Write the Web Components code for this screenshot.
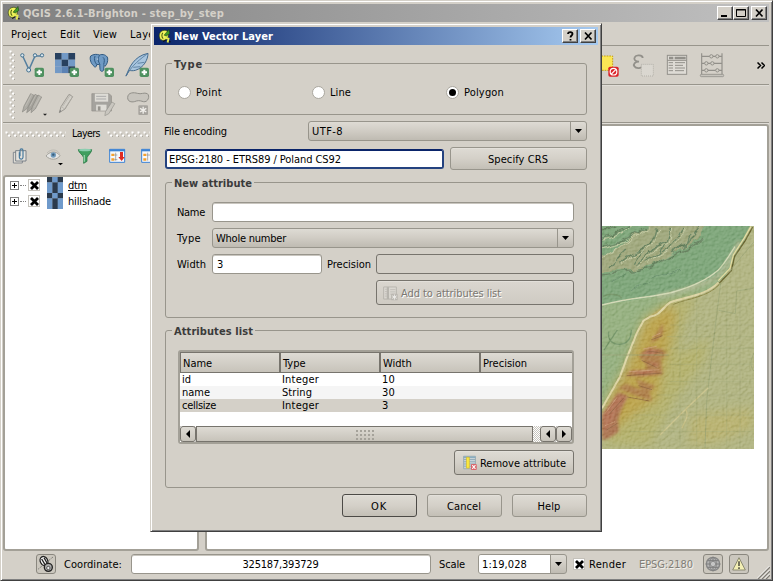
<!DOCTYPE html>
<html lang="en">
<head>
<meta charset="utf-8">
<title>QGIS 2.6.1-Brighton - step_by_step</title>
<style>
html,body{margin:0;padding:0}
body{width:773px;height:581px;overflow:hidden;background:#d4d0c8;font:11px/13px "DejaVu Sans Condensed","DejaVu Sans","Liberation Sans",sans-serif;font-stretch:condensed;color:#000}
</style>
</head>
<body>
<gis-window></gis-window>
<script>
/* Icon artwork: [viewBox, width, height, markup] */
const plus = (x,y)=>`<rect x="${x}" y="${y}" width="28" height="28" rx="5" fill="#4f9160"/><path d="M${x+14} ${y+6}v16M${x+6} ${y+14}h16" stroke="#fff" stroke-width="6"/>`;
const checker = (x,y,s,rows)=>rows.map((r,j)=>[...r].map((c,i)=>`<rect x="${x+i*s}" y="${y+j*s}" width="${s+.3}" height="${s+.3}" fill="${{d:'#27405f',m:'#5b82b4',l:'#7299c6'}[c]}"/>`).join('')).join('');
const ICONS = {
 qgis:['0 0 16 16',14,14,`<path d="M7 1.500C3 2 1 5 1.500 9c.5 3 3 4.500 5.500 4 3-.5 5-3.500 5-7 0-3-2-5-5-4.500z" fill="#eef35c" stroke="#1d2a08" stroke-width=".7"/><path d="M5.500 4.500c-1.500 1.500-1.500 5 .5 6.500" stroke="#4c5a12" stroke-width="1.200" fill="none"/><path d="M7 7L12.500.500l1 4.500-4 3z" fill="#3f9b28" stroke="#17350b" stroke-width=".6"/><path d="M8 10l4 1-1 4.500" stroke="#e6ea50" stroke-width="2.200" fill="none"/><path d="M6 14.500l3-2M12.500 14.500h2" stroke="#111" stroke-width="1.200"/>`],
 vector:['57 156 78 78',26,26,`<path d="M68 168L87 209 105 168H124" fill="none" stroke="#557f9f" stroke-width="4.500"/><g fill="#dce8ef" stroke="#44718f" stroke-width="3"><circle cx="67" cy="166" r="5"/><circle cx="86" cy="210" r="6"/><circle cx="105" cy="166" r="5"/><circle cx="126" cy="166" r="5"/></g>${plus(104,203)}`],
 raster:['162 156 78 78',26,26,checker(165,159,20,['dld','ldl','lmd'])+plus(209,203)],
 postgis:['267 156 78 78',26,26,`<path d="M272 168c8-6 20-6 26-3 10-4 22 0 25 9 1 11-2 19-8 25l-3-3-1 14c-3 6-10 5-11-2l-1-15-9 1-1 5c-3 4-8 1-9-3-7-4-12-21-8-28z" fill="#6f9ac4" stroke="#315a82" stroke-width="3"/><path d="M285 168c-4 10 0 20 5 25M299 166c-7 9-5 18 1 27M309 172c6 4 4 13 2 22" fill="none" stroke="#315a82" stroke-width="3"/><circle cx="292" cy="177" r="1.800" fill="#fff"/>${plus(314,203)}`],
 feather:['372 156 78 78',26,26,`<path d="M378 228C388 204 400 169 444 160c0 18-12 43-38 51-8 2-14 1-18 0z" fill="#a8c5df" stroke="#456b8e" stroke-width="3"/><path d="M378 229C390 205 408 186 440 163M400 202l21-2M413 190l20-3" fill="none" stroke="#54799a" stroke-width="2.500"/>${plus(419,203)}`],
 pencils:['60 276 84 84',28,28,`<g stroke="#8a8882" stroke-width="2"><path d="M67 342l5-18 20-37 10 5-20 39z" fill="#aeaca5"/><path d="M80 344l5-18 20-37 10 5-20 39z" fill="#a5a39c"/><path d="M93 344l4-18 17-35 11 6-19 36z" fill="#b2b0a9"/><path d="M76 325l20-37M90 325l19-36M103 328l18-34" fill="none" stroke="#c5c2bb"/></g><path d="M129 347h12l-6 6z" fill="#222"/>`],
 pencil:['168 276 66 84',22,28,`<path d="M178 344l5-18 24-37 11 7-23 37z" fill="#d2cfc8" stroke="#9d9a93" stroke-width="3"/><path d="M188 325l24-36M195 331l22-33M184 326l10 7" stroke="#b0ada6" stroke-width="2"/><path d="M178 344l2-8 4 3z" fill="#777"/>`],
 save:['267 270 80 84',27,28,`<path d="M275 281h52l7 7v45h-59z" fill="#a5a39e" stroke="#92908a" stroke-width="2"/><path d="M284 281h40v24h-40z" fill="#dedcd6"/><path d="M288 289h30M288 297h30" stroke="#aaa" stroke-width="3"/><path d="M288 314h31v18h-31z" fill="#dedcd6"/><path d="M293 319h8v13h-8z" fill="#96948e"/><path d="M314 347l2-12 19-29 9 5-18 30z" fill="#c9c6bf" stroke="#96948e" stroke-width="2"/>`],
 shape:['375 270 78 84',26,28,`<path d="M383 293c0-17 20-16 29-13 12 4 20-4 30 1 9 7 2 27-12 24-12-4-16-4-27 0-9 2-20 0-20-12z" fill="#c7c4bd" stroke="#92908a" stroke-width="3"/><rect x="415" y="316" width="29" height="29" rx="3" fill="#a7a49e"/><path d="M429.500 320v21M420 325l19 11M439 325l-19 11" stroke="#f1efeb" stroke-width="4"/>`],
 deselect:['30 156 60 78',20,26,`<path d="M10 168h58v43H10z" fill="#fbe755" stroke="#c6a117" stroke-width="3" stroke-dasharray="5 3"/><rect x="55" y="200" width="31" height="30" rx="5" fill="#dc2329"/><circle cx="70.500" cy="215" r="10" fill="none" stroke="#fff" stroke-width="3.500"/><path d="M64 222l14-14" stroke="#fff" stroke-width="3.500"/>`],
 expr:['126 156 69 78',23,26,`<path d="M158 174c0-9-20-11-24-2-4 8 3 12 13 13-12 0-18 7-14 14 5 8 24 7 27-3" fill="none" stroke="#92908a" stroke-width="5.500"/><rect x="154" y="193" width="36" height="35" fill="#dad7d0" stroke="#b3b0a9" stroke-width="3" stroke-dasharray="3 3"/>`],
 table:['228 156 66 78',22,26,`<rect x="232" y="166" width="58" height="57" fill="#dedbd5" stroke="#92908a" stroke-width="3"/><path d="M237 174h13M254 174h33" stroke="#92908a" stroke-width="7"/><path d="M232 181h58" stroke="#92908a" stroke-width="3"/><path d="M236 188h13M255 188h30M236 196h13M255 196h24M236 204h13M255 204h30M236 212h13M255 212h27" stroke="#92908a" stroke-width="3"/>`],
 abacus:['327 156 78 78',26,26,`<path d="M335 160v66M396 160v66M335 169h61M335 190h61M335 211h61" fill="none" stroke="#92908a" stroke-width="3.500"/><rect x="331" y="223" width="70" height="7" rx="3" fill="#c6c3bc" stroke="#92908a" stroke-width="2.500"/><g fill="#d4d0c8" stroke="#92908a" stroke-width="3"><circle cx="364" cy="169" r="5"/><circle cx="382" cy="169" r="5"/><circle cx="349" cy="190" r="5"/><circle cx="367" cy="190" r="5"/><circle cx="349" cy="211" r="5"/><circle cx="382" cy="211" r="5"/></g>`],
 copy:['36 80 51 54',17,18,`<path d="M40 96h27v32H40z" fill="#dfdcd5" stroke="#767d85" stroke-width="2.500"/><path d="M47 91h31v31H47z" fill="#e5e2dc" stroke="#68727b" stroke-width="2.500"/><path d="M58 96v15c1 7 11 7 11 0V91c0-7-9-7-9 0v17" fill="none" stroke="#45789d" stroke-width="3.500"/>`],
 eye:['132 80 60 60',20,20,`<path d="M138 107c10-14 31-17 42-1-9 14-30 14-42 1z" fill="#e5e5e3" stroke="#a4a29c" stroke-width="3"/><circle cx="160" cy="104" r="8" fill="#6f9abd"/><circle cx="160" cy="103" r="3.500" fill="#395d78"/><path d="M141 98c11-13 30-12 38 2" fill="none" stroke="#b1afa9" stroke-width="2"/><path d="M174 128h15l-7.500 7z" fill="#000"/>`],
 funnel:['231 80 48 54',16,18,`<path d="M235 88h40c1 8-12 17-14 24v11l-10 6v-17c-2-8-16-16-16-24z" fill="#3f9e5f" stroke="#2a7a45" stroke-width="2.500"/><ellipse cx="255" cy="89" rx="19" ry="4" fill="#8cceb0"/><path d="M253 104v20" stroke="#8fd0a6" stroke-width="4"/>`],
 expand:['324 80 54 54',18,18,`<path d="M329 87h45v39h-45z" fill="#f7f8fb" stroke="#3d83d3" stroke-width="3"/><path d="M328 90h47" stroke="#3d83d3" stroke-width="6"/><path d="M334 100h9v7h-9zM334 114h9v7h-9z" fill="#f4a02e"/><path d="M347 97v24M343 104h9M343 118h9" stroke="#888" stroke-width="2"/><path d="M360 95h9v15h5l-9 12-10-12h5z" fill="#e02b20"/>`],
 collapse:['420 80 54 54',18,18,`<path d="M425 87h45v39h-45z" fill="#f7f8fb" stroke="#3d83d3" stroke-width="3"/><path d="M424 90h47" stroke="#3d83d3" stroke-width="6"/><path d="M430 100h9v7h-9zM430 114h9v7h-9z" fill="#f4a02e"/><path d="M443 97v24M440 104h12" stroke="#888" stroke-width="2"/>`],
 layer:['0 0 16 16',16,16,checker(0,0,5.34,['dld','ldl','ldl']).replaceAll('#27405f','#2b3a4c').replaceAll('#7299c6','#6f9acb')],
 attradd:['38 284 46 46',15,15,`<g opacity=".6"><path d="M40 287h39v37H40z" fill="#dedcd6" stroke="#a5a39d" stroke-width="3"/><path d="M53 287v37" stroke="#a5a39d" stroke-width="7"/><path d="M44 294h6M44 301h6M44 308h6M44 315h6M60 295h16M60 302h16M60 309h16" stroke="#a5a39d" stroke-width="2"/><rect x="63" y="308" width="20" height="20" rx="2" fill="#aaa8a2"/><path d="M73 310v16M66 314l14 8M80 314l-14 8" stroke="#fff" stroke-width="3"/></g>`],
 attrdel:['272 402 48 50',16,16,`<path d="M276 406h37v39h-37z" fill="#c9d4d9" stroke="#9cabb3" stroke-width="3"/><path d="M276 409h37" stroke="#82a9bd" stroke-width="4"/><path d="M277 416h35M277 423h35M277 430h35M277 437h35" stroke="#7797a8" stroke-width="2"/><path d="M285 409h9v34h-9z" fill="#fbe93f" stroke="#d1b727" stroke-width="2"/><rect x="299" y="430" width="18" height="19" rx="3" fill="#d96369"/><path d="M303 434l10 11M313 434l-10 11" stroke="#fff" stroke-width="3.500"/>`],
 mouse:['110 104 54 54',18,18,`<path d="M114 146L158 110" stroke="#333" stroke-width="2" stroke-dasharray="3 3"/><ellipse cx="131" cy="122" rx="11" ry="14" transform="rotate(-28 131 122)" fill="#f8f8f8" stroke="#222" stroke-width="4"/><ellipse cx="144" cy="141" rx="12" ry="12" fill="#aaa" stroke="#222" stroke-width="4"/><path d="M124 116l10 17M131 112l9 16" stroke="#222" stroke-width="4"/><circle cx="144" cy="143" r="5" fill="#eee" stroke="#222" stroke-width="2"/>`],
 crs:['939 105 54 54',18,18,`<circle cx="966" cy="132" r="20" fill="#b4b4b4" stroke="#868686" stroke-width="4"/><ellipse cx="966" cy="132" rx="10" ry="20" fill="none" stroke="#868686" stroke-width="3"/><path d="M944 132h44M966 110v44M950 122h32M950 142h32" stroke="#7d7d7d" stroke-width="3"/><circle cx="966" cy="132" r="8" fill="#c5c5c5" stroke="#8c8c8c" stroke-width="3"/>`],
 warn:['1017 105 54 54',18,18,`<path d="M1044 113l19 37h-38z" fill="#f3efb4" stroke="#8b8a72" stroke-width="3" stroke-linejoin="round"/><path d="M1044 124v14M1044 142v5" stroke="#34342c" stroke-width="4"/>`],
 min:['0 0 12 10',12,10,'<path d="M2 7h6v2H2z"/>'],
 max:['0 0 12 10',12,10,'<path d="M1.500 1.500h9v7h-9zM1 2h10" fill="none" stroke="#000"/>'],
 close:['0 0 12 10',12,10,'<path d="M3 1.500l6.500 7M9.500 1.500l-6.500 7" stroke="#000" stroke-width="1.700"/>'],
 help:['0 0 12 10',12,10,'<path d="M4 3C4 .5 8.500.5 8.500 3c0 1.500-2 1.500-2 3.500M6.500 8v1.500" fill="none" stroke="#000" stroke-width="1.800"/>'],
 down:['0 0 7 4',7,4,'<path d="M0 0h7L3.500 4z"/>'],
 left:['0 0 4 8',4,8,'<path d="M4 0v8L0 4z"/>'],
 right:['0 0 4 8',4,8,'<path d="M0 0v8l4-4z"/>'],
 cross:['0 0 9 9',9,9,'<path d="M1 1l7 7M8 1l-7 7" stroke="#000" stroke-width="2.800"/>'],
 more:['0 0 8 7',8,7,'<path d="M.5.5l3 3-3 3M4.500.5l3 3-3 3" fill="none" stroke="#000" stroke-width="1.500"/>'],
 sizegrip:['0 0 13 13',13,13,'<path d="M1 13L13 1M5 13l8-8M9 13l4-4" stroke="#807d76" stroke-width="1.400"/><path d="M0 12.500L12.500 0M4 12.500L12.500 4M8 12.500L12.500 8" stroke="#fff" stroke-width=".8"/>']
};

function define(name, css, html, after){
  customElements.define(name, class extends HTMLElement{
    connectedCallback(){
      if(this.shadowRoot) return;
      const t=document.createElement('template');
      t.innerHTML=`<style>:host{display:block;box-sizing:border-box}*{box-sizing:border-box}${css}</style>`+(typeof html==='function'?html(this):html);
      this.attachShadow({mode:'open'}).append(t.content.cloneNode(true));
      if(after) after(this);
    }
  });
}

define('ui-icon',':host{flex:none;line-height:0}svg{display:block}',el=>{
  const [vb,w,h,m]=ICONS[el.getAttribute('name')];
  return `<svg width="${w}" height="${h}" viewBox="${vb}">${m}</svg>`;
});

/* A label with an optional fixed advance width; spacing is spread between its letters */
define('ui-label',':host{display:inline-block;flex:none;white-space:nowrap}span{display:inline-block;white-space:pre}:host([underline]) span{text-decoration:underline}',
 el=>`<span>${el.getAttribute('text')}</span>`,
 el=>{
  const w=+el.getAttribute('w'); if(!w) return;
  const s=el.shadowRoot.querySelector('span');
  const n=s.textContent.length, nat=s.getBoundingClientRect().width;
  s.style.letterSpacing=((w+1-nat)/n).toFixed(3)+'px';
  el.style.width=w+'px';
  s.style.marginLeft='-1px';
 });

define('cap-button',':host{flex:none;width:16px;height:14px;background:#d4d0c8;border:1px solid;border-color:#fff #404040 #404040 #fff;box-shadow:inset -1px -1px #808080;padding:1px}',
 el=>`<ui-icon name="${el.getAttribute('icon')}"></ui-icon>`);

define('title-bar',':host{display:flex;align-items:center;flex:none;height:18px;padding:0 2px 0 4px;font-weight:bold;gap:3px}.b{margin-left:auto;display:flex}',
 `<ui-icon name="qgis"></ui-icon><slot></slot><div class="b"><slot name="buttons"></slot></div>`);

define('group-box',`:host{position:relative;border:1px solid #98958c;border-radius:3px}
 .t{position:absolute;left:6px;top:-6px;background:#d4d0c8;padding:0 2px;font-weight:bold;color:#3b3b3b;line-height:13px}`,
 el=>`<ui-label class="t" text="${el.getAttribute('label')}"></ui-label><slot></slot>`,
 el=>{
  const s=el.shadowRoot.querySelector('.t').shadowRoot.querySelector('span');
  const w=+el.getAttribute('lw'); s.style.letterSpacing=((w+1-s.getBoundingClientRect().width)/s.textContent.length).toFixed(3)+'px';
 });

define('push-button',`:host{display:flex;flex:none;align-items:center;justify-content:center;gap:3px;border:1px solid #98958c;border-radius:3px;background:linear-gradient(#dedbd4,#d4d0c8 50%,#c3bfb6);box-shadow:inset 0 1px #e3e0da;padding-top:1px}
 :host([dark]){border-color:#77746d}:host([default]){border-color:#4c4a46}
 :host([disabled]){background:linear-gradient(#dad6cf,#cfcbc3);border-color:#77746d;color:#7b7872;text-shadow:1px 1px #fff}`,'<slot></slot>');

define('line-edit',`:host{display:flex;align-items:center;flex:none;height:20px;background:#fff;border:1px solid #98958c;border-radius:3px;padding:1px 5px 0;box-shadow:inset 0 1px #c9c6bf}
 :host([focus]){border:2px solid #24427f;border-top-color:#0a246a;padding:1px 3px 0;box-shadow:none}
 :host([disabled]){background:#d4d0c8;border-color:#77746d;box-shadow:none}`,'<slot></slot>');

define('combo-box',`:host{display:flex;align-items:stretch;flex:none;height:20px;border:1px solid #98958c;border-radius:3px;background:linear-gradient(#dedbd4,#d0ccc4 50%,#bfbbb2);overflow:hidden}
 .v{flex:1;display:flex;align-items:center;padding-left:4px}.a{width:16px;border-left:1px solid #98958c;display:grid;place-items:center}
 :host([editable]) .v{background:#fff}`,'<div class="v"><slot></slot></div><div class="a"><ui-icon name="down"></ui-icon></div>');

define('radio-button',`:host{display:flex;align-items:center;gap:6px;width:134px;flex:none}
 i{width:13px;height:13px;border-radius:50%;border:1px solid #aaa79f;background:#fff;display:grid;place-items:center}
 i::after{content:"";width:7px;height:7px;border-radius:50%}:host([checked]) i::after{background:#000}ui-label{margin-top:1px}`,'<i></i><slot></slot>');

define('check-box',':host{flex:none;width:12px;height:12px;border:1px solid #c5c2bb;background:#fff;padding:1px 0 0 1px}','<ui-icon name="cross"></ui-icon>');

define('tool-button',':host{flex:none;width:20px;height:20px;border:1px solid #8a877f;border-radius:3px;background:#cbc7be}',el=>`<ui-icon name="${el.getAttribute('icon')}"></ui-icon>`);

define('drag-grip',':host{flex:none;line-height:0}svg{display:block}',
`<svg width="100%" height="100%"><defs><pattern id="z" width="6" height="6" patternUnits="userSpaceOnUse"><path d="M.5.5h2v2h-2zM3 3.500h2v2h-2z" fill="#fff"/><path d="M2 2.500h1.500v1H2zM5 5h1v1H5z" fill="#aaa79f"/></pattern></defs><rect width="100%" height="100%" fill="url(#z)"/></svg>`);

define('tool-bar',':host{display:flex;flex:none;align-items:center;border-bottom:1px solid #98958c;box-shadow:0 1px #e0ddd7}drag-grip{width:6px;height:30px;margin:0 4px 0 6px}','<drag-grip></drag-grip><slot></slot>');

define('layer-row',`:host{display:flex;align-items:center;height:16px;color:#000}
 .e{width:9px;height:9px;border:1px solid #808080;background:linear-gradient(#000,#000) center/5px 1px no-repeat,linear-gradient(#000,#000) center/1px 5px no-repeat}
 .d{width:6px;border-top:1px dotted #808080;margin:0 2px 0 1px}ui-icon{margin:0 6px 0 7px}`,
 '<div class="e"></div><div class="d"></div><check-box></check-box><ui-icon name="layer"></ui-icon><slot></slot>');

define('layers-panel',`:host{width:196px;display:flex;flex-direction:column}
 .h{height:19px;display:flex;align-items:center;padding:0 0 0 2px;gap:7px;font-size:10.5px}.h drag-grip{width:61px;height:6px}.h drag-grip+ui-label+drag-grip{width:90px}
 .t{height:32px;display:flex;align-items:flex-start;padding:4px 0 0 9px}
 .l{flex:1;background:#fff;border:2px solid #a3a097;border-radius:3px;padding:0 0 0 5px}`,
 `<div class="h"><drag-grip></drag-grip><ui-label text="Layers" w="27"></ui-label><drag-grip></drag-grip></div>
 <div class="t"><ui-icon name="copy"></ui-icon><ui-icon name="eye" style="margin-left:15px"></ui-icon><ui-icon name="funnel" style="margin-left:13px"></ui-icon><ui-icon name="expand" style="margin-left:15px"></ui-icon><ui-icon name="collapse" style="margin-left:14px"></ui-icon></div>
 <div class="l"><layer-row><ui-label underline text="dtm" w="18"></ui-label></layer-row><layer-row><ui-label text="hillshade" w="42"></ui-label></layer-row></div>`);

/* Shaded relief raster: colour ramp by elevation with a lit noise texture on top */
define('map-canvas',`:host{background:#fff;border:2px solid #a3a097;border-radius:3px;display:flex;justify-content:flex-end;align-items:flex-start;padding:100px 13px 0 0}svg{display:block}`,
`<svg width="152" height="223" viewBox="36 33 456 669" preserveAspectRatio="none">
<defs>
<filter id="b4" x="-30%" y="-30%" width="160%" height="160%"><feGaussianBlur stdDeviation="4"/></filter>
<filter id="b14" x="-40%" y="-40%" width="180%" height="180%"><feGaussianBlur stdDeviation="16"/></filter>
<filter id="rough" x="-5%" y="-5%" width="110%" height="110%"><feTurbulence type="fractalNoise" baseFrequency=".025" numOctaves="3" seed="3"/><feDisplacementMap in="SourceGraphic" scale="28" xChannelSelector="R" yChannelSelector="G"/></filter>
<filter id="hs" x="0" y="0" width="100%" height="100%" color-interpolation-filters="sRGB"><feTurbulence type="fractalNoise" baseFrequency=".1 .12" numOctaves="3" seed="7"/><feDiffuseLighting surfaceScale="3.500" diffuseConstant=".68" lighting-color="#fff"><feDistantLight azimuth="225" elevation="50"/></feDiffuseLighting></filter>
<clipPath id="c"><rect x="36" y="33" width="456" height="669"/></clipPath>
</defs>
<g clip-path="url(#c)">
<rect x="36" y="33" width="456" height="669" fill="#b3b685"/>
<path d="M0 0H492L484 35 440 120 405 185 350 228 240 260 160 315 110 440 30 600z" fill="#98b283"/>
<path d="M36 33H478L435 120 385 190 320 205 240 238 130 255 36 270z" fill="#81a87d"/>
<g filter="url(#b14)"><path d="M240 262L320 240 280 330 260 420 360 370 340 440 250 560 180 690 50 690 60 560 120 430 160 320z" fill="#b7b16a" opacity=".75"/><path d="M165 315L235 265 260 300 235 400 215 480 205 550 130 600 60 650 30 660 60 540 110 460z" fill="#bda550"/><path d="M300 600l190-20v60l-110 40-80 10z" fill="#bdb46c" opacity=".7"/></g>
<g filter="url(#rough)">
<path d="M26 130L90 95 150 50 190 23H350L325 70 255 115 205 145 150 160 26 170z" fill="#a2aa80"/>
<g fill="none" stroke="#6b8664" stroke-width="4"><path d="M26 98C70 90 110 84 170 36M26 72C70 66 90 52 120 30M90 147C110 110 190 110 200 40M140 150C180 120 190 90 232 80L242 36M170 140C220 110 250 110 282 36M250 118C270 80 310 90 328 30M26 178L180 158 250 125 340 70M60 155L110 105M130 146L160 100M200 130l25-45M280 100l20-40M26 48L80 36M60 66L100 36"/></g>
<g fill="none" stroke="#c3caa3" stroke-width="3"><path d="M26 102C76 94 114 88 176 38M95 150C116 114 194 114 206 42M145 153C184 124 196 94 238 84L248 38M175 144C226 114 256 114 288 38M26 78C74 70 94 56 126 32M36 130C70 100 120 90 150 60"/></g>
<path d="M120 225c20-18 40-10 60-22M180 190c30-16 50-6 90-24M60 200l50-24" fill="none" stroke="#6d936f" stroke-width="3"/>
</g>
<path d="M40 245c20-14 50-5 54 5M56 350c-4 24 10 38 32 38s36-16 36-44M42 405l40-60" fill="none" stroke="#78986c" stroke-width="4"/>
<path d="M200 246C270 230 340 214 385 182 415 150 430 110 450 80" fill="none" stroke="#abb891" stroke-width="14" filter="url(#b4)"/>
<path d="M36 270C120 246 190 248 250 231 310 214 350 196 385 165 405 145 418 120 435 95" fill="none" stroke="#d3d9b6" stroke-width="4"/>
<path d="M388 204L424 167 434 124 466 76 488 36" fill="none" stroke="#6f6b35" stroke-width="4"/><path d="M385 197L420 160 430 120 462 70 483 34" fill="none" stroke="#e8dda0" stroke-width="3.500"/>
<path d="M385 203C350 240 290 245 240 262 215 280 212 300 180 305L160 318 140 355 110 430 90 485 36 580" fill="none" stroke="#ddd5a6" stroke-width="6"/>
<path d="M388 208C355 246 295 250 250 268" fill="none" stroke="#8f8a4c" stroke-width="3"/>
<g filter="url(#b4)"><path d="M178 388l24-36 16-28 2 30-14 18zM145 425l30-28 40 4 16 16-18 14 4 48-70 6-42-3 20-14 50 2-12-30zM138 492l58 20-18 18 8 28-22-6-56-22-24-10 24-14 45 18z" fill="#b08350"/><path d="M36 600l24-32 24-36 30 10-20 42-10 30 2 36-30 20-20 5z" fill="#ad7856"/></g>
<g filter="url(#b4)"><path d="M150 418l30-16 36 6-30 12zM112 470l60-6 44 8-60 8zM168 438l40 8-8 10zM40 600l45-58 24 4-30 40-15 40-24 26z" fill="#b5785a"/></g>
<g fill="none" stroke="#8b6240" stroke-width="3" opacity=".65"><path d="M184 374l34-12M170 412c16-6 30 2 50 2M155 436l45 22M110 482l105-8M146 512l40 12M112 546l66 12M56 600l44-50M50 645l32-20"/></g>
<g fill="none" stroke="#cfa480" stroke-width="3" opacity=".7"><path d="M186 366l26-12M160 402l40-8M118 470l90-6M46 595l35-48M45 632l30-12"/></g>
<g fill="none" stroke="#97a272" stroke-width="2.500" opacity=".8"><path d="M392 205L380 300 360 470 350 560 345 700M386 286l50 10 4-68 50-8M36 420h200M492 80C460 120 440 140 420 170M492 415c-12 20-12 40 0 54"/></g>
<path d="M355 518L290 580 210 660M288 585c10 20-4 32-12 55" fill="none" stroke="#cac38c" stroke-width="4"/>
<g fill="none" stroke="#9aa373" stroke-width="1.500" opacity=".6"><path d="M240 330h250M230 365h262M240 400h250M240 448h250M240 500h250M200 540h292M130 600h360M120 650h370M270 280v420M320 250v450M410 230v470M450 230v470"/></g>
<rect x="36" y="33" width="456" height="669" filter="url(#hs)" style="mix-blend-mode:soft-light" opacity=".6"/>
</g></svg>`);

define('status-bar',':host{display:flex;align-items:center;flex:none;height:28px;padding:0 0 2px 33px;position:relative}.g{position:absolute;right:-1px;bottom:0}',
`<tool-button icon="mouse"></tool-button><ui-label text="Coordinate:" w="57" style="margin-left:9px"></ui-label>
<line-edit style="width:300px;margin-left:9px;justify-content:center"><ui-label text="325187,393729" w="75"></ui-label></line-edit>
<ui-label text="Scale" w="25" style="margin-left:9px"></ui-label>
<combo-box editable style="width:89px;margin-left:13px"><ui-label text="1:19,028" w="44"></ui-label></combo-box>
<check-box style="margin-left:6px"></check-box><ui-label text="Render" w="36" style="margin-left:5px"></ui-label>
<ui-label text="EPSG:2180" w="53" style="margin-left:14px;color:#817e77;text-shadow:1px 1px #f4f2ee"></ui-label>
<tool-button icon="crs" style="margin-left:10px"></tool-button><tool-button icon="warn" style="margin-left:6px"></tool-button>
<div class="g"><ui-icon name="sizegrip"></ui-icon></div>`);

define('attribute-table',`:host{display:flex;flex-direction:column;border:2px solid #a3a097;border-radius:3px;background:#fff;height:94px}
 .r{display:grid;grid-template-columns:100px 100px 100px 1fr;height:13px;flex:none;line-height:14px;padding-left:3px}
 .h{height:21px;padding:0;background:linear-gradient(#dedbd4,#c7c3ba);border-top:1px solid #77746d;border-bottom:1px solid #77746d;line-height:21px}
 .h ui-label{padding-left:2px;border-left:1px solid #77746d;height:19px;overflow:hidden}.h ui-label+ui-label{border-left-width:2px;margin-left:-1px}
 .s{margin-top:auto;height:16px;flex:none;display:flex;background:repeating-conic-gradient(#fff 0 25%,#c8c5be 0 50%) 0 0/2px 2px}
 .s div{border:1px solid #77746d;background:linear-gradient(#dedbd4,#c7c3ba);display:grid;place-items:center}.a{width:16px;border-radius:3px}
 .dots{width:19px;height:11px;background:radial-gradient(circle,#a5a29a 0 1px,transparent 1.200px) 0 0/4px 4px}`,
`<div class="r h"><ui-label text="Name"></ui-label><ui-label text="Type"></ui-label><ui-label text="Width"></ui-label><ui-label text="Precision"></ui-label></div>
<div class="r"><span><ui-label text="id" w="8"></ui-label></span><span><ui-label text="Integer" w="36"></ui-label></span><span><ui-label text="10" w="12"></ui-label></span></div>
<div class="r" style="background:#f5f5f5"><span><ui-label text="name" w="27"></ui-label></span><span><ui-label text="String" w="29"></ui-label></span><span><ui-label text="30" w="12"></ui-label></span></div>
<div class="r" style="background:#d4d0c8"><span><ui-label text="cellsize" w="33"></ui-label></span><span><ui-label text="Integer" w="36"></ui-label></span><span><ui-label text="3" w="6"></ui-label></span></div>
<div class="s"><div class="a"><ui-icon name="left"></ui-icon></div><div style="width:337px"><span class="dots"></span></div><div class="a" style="margin-left:7px"><ui-icon name="left"></ui-icon></div><div class="a" style="flex:1"><ui-icon name="right"></ui-icon></div></div>`);

define('layer-dialog',`:host{display:block;width:452px;height:509px;background:#d4d0c8;border:1px solid;border-color:#d4d0c8 #404040 #404040 #d4d0c8;box-shadow:inset 1px 1px #fff,inset -1px -1px #808080;padding:3px}
 title-bar{background:linear-gradient(90deg,#0a246a,#a6caf0);color:#fff}
 .c{padding:18px 11px 0;display:flex;flex-direction:column}
 .row{display:flex;align-items:center}
 .a{padding:19px 12px 0 12px;display:flex;flex-direction:column;gap:6px}`,
`<title-bar><ui-label text="New Vector Layer" w="98"></ui-label><cap-button slot="buttons" icon="help" style="margin-right:2px"></cap-button><cap-button slot="buttons" icon="close"></cap-button></title-bar>
<div class="c">
<group-box label="Type" lw="28" style="height:52px"><div class="row" style="padding:22px 0 0 12px"><radio-button><ui-label text="Point" w="25"></ui-label></radio-button><radio-button><ui-label text="Line" w="20"></ui-label></radio-button><radio-button checked><ui-label text="Polygon" w="39"></ui-label></radio-button></div></group-box>
<div class="row" style="margin-top:6px"><ui-label text="File encoding" w="62"></ui-label><combo-box style="width:279px;margin-left:auto"><ui-label text="UTF-8" w="30"></ui-label></combo-box></div>
<div class="row" style="margin-top:6px;justify-content:space-between"><line-edit focus style="width:279px"><ui-label text="EPSG:2180 - ETRS89 / Poland CS92" w="171"></ui-label></line-edit><push-button style="width:137px;height:23px"><ui-label text="Specify CRS" w="59"></ui-label></push-button></div>
<group-box label="New attribute" lw="77" style="height:136px;margin-top:12px"><div class="a">
<div class="row"><ui-label text="Name" w="27" style="margin-right:7px"></ui-label><line-edit style="flex:1"></line-edit></div>
<div class="row"><ui-label text="Type" w="23" style="margin-right:11px"></ui-label><combo-box style="flex:1"><ui-label text="Whole number" w="69"></ui-label></combo-box></div>
<div class="row"><ui-label text="Width" w="28" style="margin-right:6px"></ui-label><line-edit style="width:110px"><ui-label text="3" w="6"></ui-label></line-edit><ui-label text="Precision" w="43" style="margin:0 5px 0 6px"></ui-label><line-edit disabled style="flex:1"></line-edit></div>
<push-button disabled style="width:198px;height:25px;align-self:flex-end;justify-content:flex-start;padding-left:6px"><ui-icon name="attradd"></ui-icon><ui-label text="Add to attributes list" w="99" style="margin-left:1px"></ui-label></push-button>
</div></group-box>
<group-box label="Attributes list" lw="78" style="height:158px;margin-top:12px"><div style="padding:19px 12px 0;display:flex;flex-direction:column;gap:6px"><attribute-table></attribute-table>
<push-button dark style="width:120px;height:25px;align-self:flex-end"><ui-icon name="attrdel"></ui-icon><ui-label text="Remove attribute" w="85"></ui-label></push-button></div></group-box>
<div class="row" style="margin-top:6px;gap:10px;justify-content:flex-end"><push-button default style="width:75px;height:23px"><ui-label text="OK" w="15"></ui-label></push-button><push-button style="width:75px;height:23px"><ui-label text="Cancel" w="33"></ui-label></push-button><push-button style="width:75px;height:23px"><ui-label text="Help" w="22"></ui-label></push-button></div>
</div>`);

define('gis-window',`:host{position:relative;display:flex;flex-direction:column;width:773px;height:581px;background:#d4d0c8;border:1px solid;border-color:#d4d0c8 #404040 #404040 #d4d0c8;box-shadow:inset 1px 1px #fff,inset -1px -1px #808080;padding:3px 3px 1px 2px}
 title-bar{background:linear-gradient(90deg,#808080,#c0c0c0);color:#d4d0c8}
 .m{height:24px;flex:none;display:flex;align-items:center;padding:2px 0 0 9px;border-bottom:1px solid #98958c;gap:14px}
 .w{flex:1;display:flex;gap:6px;min-height:0;padding-top:1px}map-canvas{flex:1}
 layer-dialog{position:absolute;left:149px;top:22px}`,
`<title-bar><ui-label text="QGIS 2.6.1-Brighton - step_by_step" w="200"></ui-label><cap-button slot="buttons" icon="min"></cap-button><cap-button slot="buttons" icon="max" style="margin-right:2px"></cap-button><cap-button slot="buttons" icon="close"></cap-button></title-bar>
<div class="m"><ui-label text="Project" w="35"></ui-label><ui-label text="Edit" w="19"></ui-label><ui-label text="View" w="23"></ui-label><ui-label text="Layer" w="28"></ui-label></div>
<tool-bar style="height:39px"><ui-icon name="vector"></ui-icon><ui-icon name="raster" style="margin-left:9px"></ui-icon><ui-icon name="postgis" style="margin-left:9px"></ui-icon><ui-icon name="feather" style="margin-left:9px"></ui-icon>
<ui-icon name="deselect" style="margin-left:auto"></ui-icon><ui-icon name="expr" style="margin-left:12px"></ui-icon><ui-icon name="table" style="margin-left:11px"></ui-icon><ui-icon name="abacus" style="margin-left:11px"></ui-icon><ui-icon name="more" style="margin:0 4px 0 32px"></ui-icon></tool-bar>
<tool-bar style="height:38px"><ui-icon name="pencils" style="margin-left:1px"></ui-icon><ui-icon name="pencil" style="margin-left:8px"></ui-icon><ui-icon name="save" style="margin-left:11px"></ui-icon><ui-icon name="shape" style="margin-left:9px"></ui-icon></tool-bar>
<div class="w"><layers-panel></layers-panel><map-canvas></map-canvas></div>
<status-bar></status-bar>
<layer-dialog></layer-dialog>`);
</script>
</body>
</html>
